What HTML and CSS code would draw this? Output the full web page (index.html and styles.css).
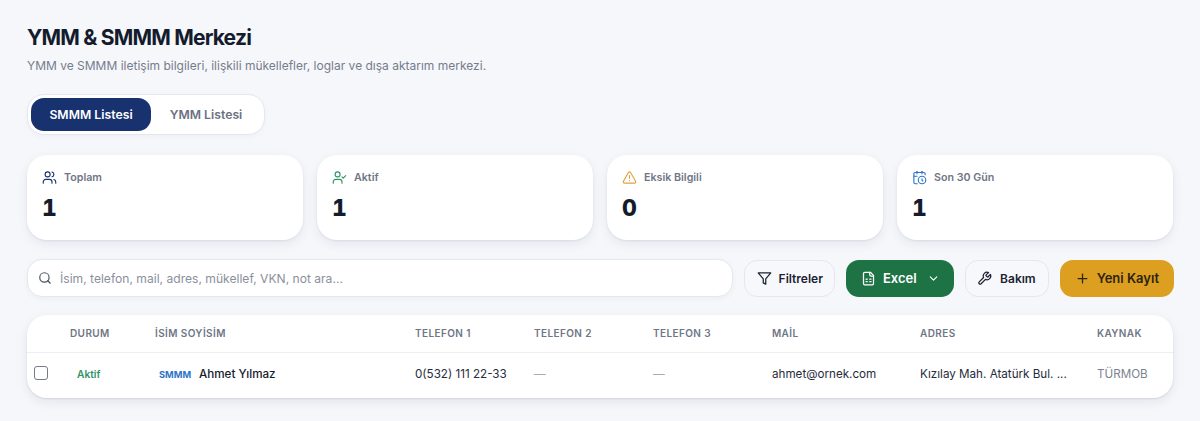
FILE: index.html
```html
<!DOCTYPE html>
<html lang="tr">
<head>
    <meta charset="UTF-8">
    <meta name="viewport" content="width=device-width, initial-scale=1.0">
    <title>YMM &amp; SMMM Merkezi</title>
    <link rel="stylesheet" href="styles.css">
</head>
<body>
    <main class="page">
        <header class="page-head">
            <h1 class="page-title">YMM &amp; SMMM Merkezi</h1>
            <p class="page-sub">YMM ve SMMM iletişim bilgileri, ilişkili mükellefler, loglar ve dışa aktarım merkezi.</p>
        </header>

        <div class="tabs">
            <button class="tab tab-active">SMMM Listesi</button>
            <button class="tab">YMM Listesi</button>
        </div>

        <section class="stats">
            <div class="stat-card">
                <div class="stat-label">
                    <svg class="stat-icon icon-navy" viewBox="0 0 24 24"><path d="M16 21v-2a4 4 0 0 0-4-4H6a4 4 0 0 0-4 4v2"/><circle cx="9" cy="7" r="4"/><path d="M22 21v-2a4 4 0 0 0-3-3.87"/><path d="M16 3.13a4 4 0 0 1 0 7.75"/></svg>
                    <span>Toplam</span>
                </div>
                <div class="stat-value">1</div>
            </div>
            <div class="stat-card">
                <div class="stat-label">
                    <svg class="stat-icon icon-green" viewBox="0 0 24 24"><path d="M16 21v-2a4 4 0 0 0-4-4H6a4 4 0 0 0-4 4v2"/><circle cx="9" cy="7" r="4"/><path d="m16 11 2 2 4-4"/></svg>
                    <span>Aktif</span>
                </div>
                <div class="stat-value">1</div>
            </div>
            <div class="stat-card">
                <div class="stat-label">
                    <svg class="stat-icon icon-amber" viewBox="0 0 24 24"><path d="m21.73 18-8-14a2 2 0 0 0-3.48 0l-8 14A2 2 0 0 0 4 21h16a2 2 0 0 0 1.73-3Z"/><path d="M12 9v4"/><path d="M12 17h.01"/></svg>
                    <span>Eksik Bilgili</span>
                </div>
                <div class="stat-value">0</div>
            </div>
            <div class="stat-card">
                <div class="stat-label">
                    <svg class="stat-icon icon-blue" viewBox="0 0 24 24"><path d="M21 7.5V6a2 2 0 0 0-2-2H5a2 2 0 0 0-2 2v14a2 2 0 0 0 2 2h3.5"/><path d="M16 2v4"/><path d="M8 2v4"/><path d="M3 10h5"/><path d="M17.5 17.5 16 16.3V14"/><circle cx="16" cy="16" r="6"/></svg>
                    <span>Son 30 Gün</span>
                </div>
                <div class="stat-value">1</div>
            </div>
        </section>

        <section class="toolbar">
            <label class="search">
                <svg class="search-icon" viewBox="0 0 24 24"><circle cx="11" cy="11" r="8"/><path d="m21 21-4.3-4.3"/></svg>
                <input class="search-input" type="text" placeholder="İsim, telefon, mail, adres, mükellef, VKN, not ara...">
            </label>
            <button class="btn btn-light btn-filter">
                <svg class="btn-icon" viewBox="0 0 24 24"><polygon points="22 3 2 3 10 12.46 10 19 14 21 14 12.46 22 3"/></svg>
                Filtreler
            </button>
            <button class="btn btn-excel">
                <svg class="btn-icon" viewBox="0 0 24 24"><path d="M15 2H6a2 2 0 0 0-2 2v16a2 2 0 0 0 2 2h12a2 2 0 0 0 2-2V7Z"/><path d="M14 2v4a2 2 0 0 0 2 2h4"/><path d="M8 13h2"/><path d="M14 13h2"/><path d="M8 17h2"/><path d="M14 17h2"/></svg>
                Excel
                <svg class="btn-caret" viewBox="0 0 24 24"><path d="m6 9 6 6 6-6"/></svg>
            </button>
            <button class="btn btn-light btn-tools">
                <svg class="btn-icon" viewBox="0 0 24 24"><path d="M14.7 6.3a1 1 0 0 0 0 1.4l1.6 1.6a1 1 0 0 0 1.4 0l3.77-3.77a6 6 0 0 1-7.94 7.94l-6.91 6.91a2.12 2.12 0 0 1-3-3l6.91-6.91a6 6 0 0 1 7.94-7.94l-3.76 3.76z"/></svg>
                Bakım
            </button>
            <button class="btn btn-new">
                <svg class="btn-icon" viewBox="0 0 24 24"><path d="M5 12h14"/><path d="M12 5v14"/></svg>
                Yeni Kayıt
            </button>
        </section>

        <section class="table-card">
            <table class="records">
                <colgroup>
                    <col class="col-check">
                    <col class="col-status">
                    <col class="col-name">
                    <col class="col-phone">
                    <col class="col-phone">
                    <col class="col-phone">
                    <col class="col-mail">
                    <col class="col-address">
                    <col class="col-source">
                </colgroup>
                <thead>
                    <tr>
                        <th></th>
                        <th>DURUM</th>
                        <th>İSİM SOYİSİM</th>
                        <th>TELEFON 1</th>
                        <th>TELEFON 2</th>
                        <th>TELEFON 3</th>
                        <th>MAİL</th>
                        <th>ADRES</th>
                        <th>KAYNAK</th>
                    </tr>
                </thead>
                <tbody>
                    <tr>
                        <td class="cell-check"><span class="checkbox"></span></td>
                        <td class="cell-status">Aktif</td>
                        <td class="cell-name"><span class="type-badge">SMMM</span>Ahmet Yılmaz</td>
                        <td>0(532) 111 22-33</td>
                        <td class="cell-empty">—</td>
                        <td class="cell-empty">—</td>
                        <td>ahmet@ornek.com</td>
                        <td class="cell-address">Kızılay Mah. Atatürk Bul. ...</td>
                        <td class="cell-source">TÜRMOB</td>
                    </tr>
                </tbody>
            </table>
        </section>
    </main>
</body>
</html>
```

FILE: styles.css
```css
* {
    margin: 0;
    padding: 0;
    box-sizing: border-box;
}

body {
    background-color: #f5f7fb;
    color: #141b2d;
    font-family: 'Inter', 'Liberation Sans', sans-serif;
    overflow: hidden;
}

button {
    font-family: inherit;
    cursor: pointer;
}

.page {
    padding: 24px 27px 22px;
}

.page-title {
    font-size: 21px;
    line-height: 27px;
    font-weight: 700;
    letter-spacing: -0.8px;
    color: #141b2d;
}

.page-sub {
    margin-top: 7px;
    font-size: 12px;
    line-height: 16px;
    color: #767c8b;
}

.tabs {
    display: inline-flex;
    margin-top: 20px;
    padding: 3px;
    background: #fff;
    border: 1px solid #e4e7ee;
    border-radius: 17px;
    box-shadow: 0 2px 6px rgba(20, 30, 60, 0.03);
}

.tab {
    width: 110px;
    height: 33px;
    background: none;
    border: none;
    border-radius: 13px;
    font-size: 12.25px;
    font-weight: 600;
    color: #6b7180;
}

.tab-active {
    width: 120px;
    background: #17326f;
    color: #fff;
}

.stats {
    display: grid;
    grid-template-columns: repeat(4, 1fr);
    gap: 14px;
    margin-top: 20px;
}

.stat-card {
    height: 85px;
    padding: 14px 15px 0;
    background: #fff;
    border-radius: 20px;
    box-shadow: 0 1px 2px rgba(20, 30, 60, 0.08), 0 4px 12px rgba(20, 30, 60, 0.07);
}

.stat-label {
    display: flex;
    align-items: center;
    gap: 7px;
    height: 16px;
    font-size: 10.7px;
    font-weight: 600;
    color: #6f7686;
}

.stat-icon {
    width: 15px;
    height: 15px;
    fill: none;
    stroke-width: 1.8;
    stroke-linecap: round;
    stroke-linejoin: round;
}

.icon-navy { stroke: #17326f; }
.icon-green { stroke: #2f9464; }
.icon-amber { stroke: #e0a23a; }
.icon-blue { stroke: #2f74c9; }

.stat-value {
    margin-top: 8px;
    font-size: 23px;
    line-height: 30px;
    font-weight: 800;
    font-variant-numeric: tabular-nums;
    color: #141b2d;
}

.toolbar {
    display: flex;
    align-items: center;
    gap: 11px;
    margin-top: 19px;
    margin-right: -1px;
}

.search {
    flex: 1;
    display: flex;
    align-items: center;
    gap: 8px;
    height: 38px;
    padding: 0 10px;
    background: #fff;
    border: 1px solid #e4e7ee;
    border-radius: 15px;
    box-shadow: 0 2px 6px rgba(20, 30, 60, 0.04);
}

.search-icon {
    width: 14px;
    height: 14px;
    fill: none;
    stroke: #4b5160;
    stroke-width: 2;
    stroke-linecap: round;
    stroke-linejoin: round;
    flex-shrink: 0;
}

.search-input {
    flex: 1;
    border: none;
    outline: none;
    background: none;
    font-family: inherit;
    font-size: 12.1px;
    color: #141b2d;
}

.search-input::placeholder {
    color: #8b909c;
    opacity: 1;
}

.btn {
    display: inline-flex;
    align-items: center;
    height: 37px;
    gap: 7px;
    border-radius: 13px;
    border: 1px solid transparent;
    font-size: 12px;
    font-weight: 600;
    white-space: nowrap;
}

.btn-icon {
    width: 15px;
    height: 15px;
    fill: none;
    stroke: currentColor;
    stroke-width: 2;
    stroke-linecap: round;
    stroke-linejoin: round;
}

.btn-caret {
    width: 13px;
    height: 13px;
    margin-left: 3px;
    fill: none;
    stroke: currentColor;
    stroke-width: 2;
    stroke-linecap: round;
    stroke-linejoin: round;
}

.btn-light {
    background: #f7f8fb;
    border-color: #e4e7ee;
    color: #1b2233;
}

.btn-filter {
    padding: 0 11.5px;
}

.btn-tools {
    gap: 8px;
    padding: 0 12px 0 11px;
}

.btn-excel {
    padding: 0 13.5px;
    background: #1e7345;
    color: #fff;
    font-size: 13px;
}

.btn-new {
    padding: 0 14px;
    background: #dc9f20;
    color: #2d2412;
    font-size: 13px;
}

.table-card {
    margin-top: 18px;
    background: #fff;
    border-radius: 20px;
    box-shadow: 0 1px 2px rgba(20, 30, 60, 0.1), 0 4px 12px rgba(20, 30, 60, 0.08);
    overflow: hidden;
}

.records {
    width: 100%;
    table-layout: fixed;
    border-collapse: collapse;
}

.col-check { width: 31px; }
.col-status { width: 85px; }
.col-name { width: 260px; }
.col-phone { width: 119px; }
.col-mail { width: 148px; }
.col-address { width: 177px; }

.records th {
    height: 37px;
    padding: 0 0 0 12px;
    border-bottom: 1px solid #eceef3;
    text-align: left;
    font-size: 10px;
    font-weight: 600;
    letter-spacing: 0.4px;
    color: #6f7686;
}

.records td {
    height: 46px;
    padding: 0 0 2px 12px;
    font-size: 11.65px;
    color: #262c3b;
    white-space: nowrap;
}

.records .cell-check {
    padding: 0 0 5px 7px;
}

.checkbox {
    display: block;
    width: 14px;
    height: 14px;
    background: #fff;
    border: 1px solid #767b86;
    border-radius: 3px;
}

.records .cell-status {
    padding-left: 19px;
    font-size: 10.2px;
    font-weight: 600;
    color: #2f9464;
}

.records .cell-name {
    font-weight: 500;
    color: #141b2d;
}

.type-badge {
    display: inline-block;
    width: 44px;
    padding-left: 4px;
    font-size: 9.3px;
    font-weight: 700;
    color: #2f74c9;
}

.records .cell-empty {
    color: #a6aab4;
}

.records .cell-source {
    color: #7d8290;
}
```
